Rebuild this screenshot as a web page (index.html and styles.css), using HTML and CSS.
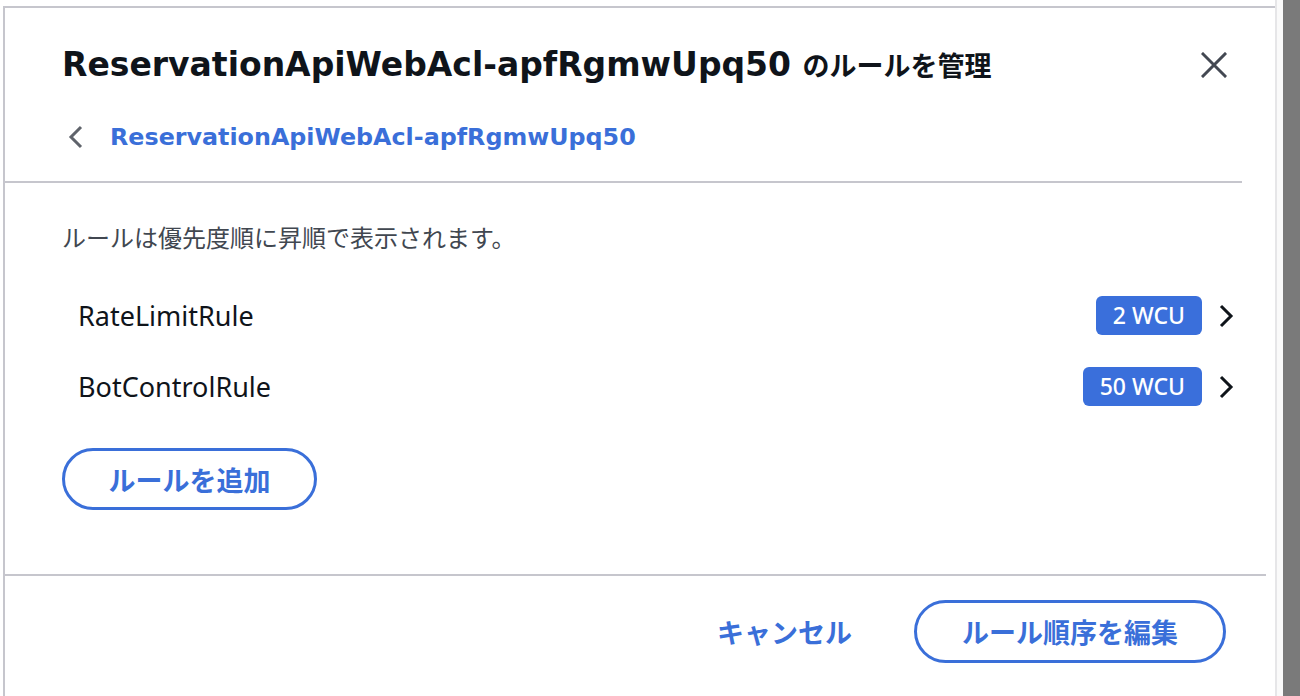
FILE: index.html
```html
<!DOCTYPE html>
<html lang="ja">
<head>
<meta charset="utf-8">
<title>ルールを管理</title>
<link rel="stylesheet" href="styles.css">
</head>
<body>
<div class="screen">
  <div class="stage">
    <div class="modal">
      <div class="hdr">
        <div class="title-row">
          <h1 class="title">ReservationApiWebAcl-apfRgmwUpq50 <span class="ja">のルールを管理</span></h1>
          <button class="close" aria-label="閉じる">
            <svg width="26" height="26" viewBox="0 0 26 26"><path d="M2 2 L24 24 M24 2 L2 24" stroke="#434852" stroke-width="3" stroke-linecap="square" fill="none"/></svg>
          </button>
        </div>
        <div class="back-row">
          <svg class="back" width="16" height="24" viewBox="0 0 16 24"><path d="M13 2 L3 12 L13 22" stroke="#5f636b" stroke-width="3" fill="none"/></svg>
          <a class="back-link" href="#">ReservationApiWebAcl-apfRgmwUpq50</a>
        </div>
      </div>
      <div class="body">
        <p class="desc">ルールは優先度順に昇順で表示されます。</p>
        <ul class="rules">
          <li class="rule">
            <span class="rule-name">RateLimitRule</span>
            <span class="badge">2 WCU</span>
            <svg class="chev" width="16" height="24" viewBox="0 0 16 24"><path d="M3 2 L13 12 L3 22" stroke="#0f141a" stroke-width="3" fill="none"/></svg>
          </li>
          <li class="rule">
            <span class="rule-name">BotControlRule</span>
            <span class="badge">50 WCU</span>
            <svg class="chev" width="16" height="24" viewBox="0 0 16 24"><path d="M3 2 L13 12 L3 22" stroke="#0f141a" stroke-width="3" fill="none"/></svg>
          </li>
        </ul>
        <button class="btn-outline add">ルールを追加</button>
      </div>
      <div class="ftr">
        <button class="btn-link">キャンセル</button>
        <button class="btn-outline edit">ルール順序を編集</button>
      </div>
    </div>
  </div>
  <div class="gutter"></div>
  <div class="scrollbar"></div>
</div>
</body>
</html>
```
FILE: styles.css
```css
* { box-sizing: border-box; }
html, body { margin: 0; padding: 0; background: #fff; }
body {
  font-family: "Noto Sans", "Noto Sans CJK JP", sans-serif;
  color: #0f141a;
}
.screen {
  display: flex;
  height: 696px;
  overflow: hidden;
}
.stage {
  width: 1275px;
  padding: 6px 0 0 3px;
}
.gutter {
  width: 8px;
  background: #fafafa;
  border-left: 2px solid #e6e6e8;
}
.scrollbar {
  width: 17px;
  background: #7a7a7a;
}
.modal {
  height: 100%;
  border-top: 2px solid #c6c6cd;
  border-left: 2px solid #c6c6cd;
  display: flex;
  flex-direction: column;
}
.hdr {
  margin-right: 33px;
  padding: 37px 15px 28px 57px;
  border-bottom: 2px solid #c6c6cd;
}
.title-row {
  display: flex;
  align-items: center;
  justify-content: space-between;
  height: 40px;
}
.title {
  margin: 0;
  font-family: "DejaVu Sans", "Noto Sans CJK JP", sans-serif;
  font-size: 33px;
  font-weight: 700;
  line-height: 40px;
  color: #0f141a;
  white-space: nowrap;
}
.title .ja {
  font-family: "Noto Sans CJK JP", sans-serif;
  font-size: 27px;
}
.close {
  border: 0;
  background: none;
  padding: 0;
  width: 26px;
  height: 26px;
  display: flex;
}
.back-row {
  margin-top: 36px;
  height: 32px;
  display: flex;
  align-items: center;
  padding-left: 6px;
}
.back { margin-right: 26px; }
.back-link {
  font-family: "DejaVu Sans", sans-serif;
  font-size: 23.8px;
  font-weight: 700;
  color: #3a6fd9;
  text-decoration: none;
  line-height: 32px;
}
.body {
  padding: 40px 24px 64px 57px;
  border-bottom: 2px solid #c6c6cd;
  margin-right: 9px;
}
.desc {
  margin: 0;
  font-size: 24px;
  line-height: 30px;
  color: #414750;
}
.rules {
  list-style: none;
  margin: 27px 0 0;
  padding: 0;
}
.rule {
  display: flex;
  align-items: center;
  height: 71px;
  padding: 0 8px 0 16px;
}
.rule-name {
  flex: 1;
  font-size: 27px;
}
.badge {
  background: #3a6fdb;
  color: #fff;
  font-size: 23px;
  font-weight: 500;
  height: 39px;
  line-height: 39px;
  padding: 0 17px;
  border-radius: 6px;
}
.chev { margin-left: 16px; }
.btn-outline {
  font-family: "Noto Sans CJK JP", sans-serif;
  background: #fff;
  border: 3px solid #3a6fd9;
  border-radius: 40px;
  color: #3a6fd9;
  font-weight: 700;
  font-size: 27px;
  height: 62px;
  padding: 0;
}
.add {
  margin-top: 26px;
  width: 255px;
}
.ftr {
  display: flex;
  justify-content: flex-end;
  align-items: center;
  padding: 24px 49px 0 0;
}
.btn-link {
  font-family: "Noto Sans CJK JP", sans-serif;
  border: 0;
  background: none;
  color: #3a6fd9;
  font-size: 27px;
  font-weight: 700;
  padding: 0;
  margin-right: 62px;
}
.edit {
  width: 312px;
  height: 63px;
}
```
